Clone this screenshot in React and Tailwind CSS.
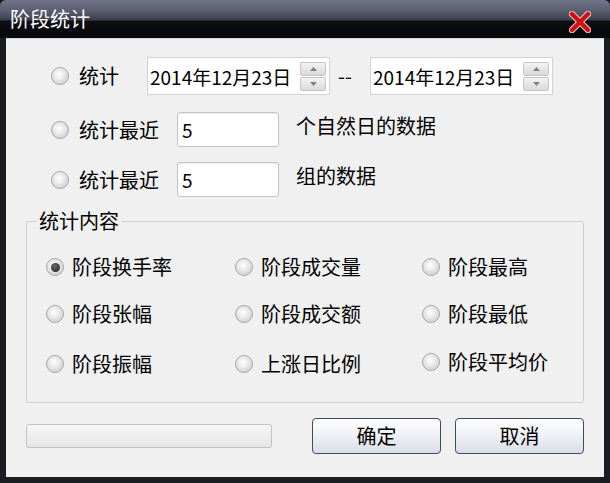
import React from "react";

const FONT = { fontFamily: '"Noto Sans CJK SC", "Noto Sans", sans-serif' };

function Radio({ checked }) {
  return (
    <span className="relative flex h-[18px] w-[18px] shrink-0 items-center justify-center rounded-full border border-[#a4a4a4] bg-[radial-gradient(circle_at_45%_40%,#ffffff_0%,#e6e6e6_45%,#bdbdbd_100%)] shadow-[inset_0_0_1px_#fff]">
      {checked && <span className="h-[9px] w-[9px] rounded-full bg-[radial-gradient(circle_at_40%_35%,#6a6a6a,#1c1c1c)]" />}
    </span>
  );
}

function Spinner() {
  return (
    <div className="flex flex-col gap-[1px]">
      <div className="flex h-[14px] w-[26px] items-center justify-center rounded-[2px] border border-[#c6c6c6] bg-[linear-gradient(to_bottom,#f4f4f4,#d9d9d9)]">
        <svg width="7" height="4" viewBox="0 0 7 4"><path d="M0 4 L3.5 0 L7 4 Z" fill="#7f7f7f" /></svg>
      </div>
      <div className="flex h-[14px] w-[26px] items-center justify-center rounded-[2px] border border-[#c6c6c6] bg-[linear-gradient(to_bottom,#f4f4f4,#d9d9d9)]">
        <svg width="7" height="4" viewBox="0 0 7 4"><path d="M0 0 L3.5 4 L7 0 Z" fill="#7f7f7f" /></svg>
      </div>
    </div>
  );
}

function DateBox() {
  return (
    <div className="flex h-[38px] w-[183px] items-center justify-between border border-[#d2d2d2] bg-white pl-[2px] pr-[3px]">
      <span className="text-[19px] leading-none text-black">2014年12月23日</span>
      <Spinner />
    </div>
  );
}

function TextInput() {
  return (
    <div className="flex h-[35px] w-[102px] items-center rounded-[3px] border border-[#c4c4c4] bg-white pl-[4px] shadow-[inset_0_1px_1px_rgba(0,0,0,0.08)]">
      <span className="text-[19px] leading-none text-black">5</span>
    </div>
  );
}

function Option({ checked, label, className = "" }) {
  return (
    <div className={"flex items-center gap-[8px] " + className}>
      <Radio checked={checked} />
      <span className="text-[20px] leading-none text-black">{label}</span>
    </div>
  );
}

export default function App() {
  return (
    <div style={FONT} className="flex h-[483px] w-[610px] flex-col bg-[#1b1c21]">
      {/* Title bar */}
      <div className="flex h-[38px] shrink-0 items-center justify-between rounded-t-[6px] bg-[linear-gradient(to_bottom,#72768a_0%,#585c6e_30%,#3c3f4c_52%,#0e0f13_56%,#060709_100%)] pl-[10px] pr-[19px]">
        <span className="text-[20px] leading-none text-white">阶段统计</span>
        <svg width="22" height="22" viewBox="0 0 22 22" className="mt-[6px]">
          <path d="M3 3 L19 19 M19 3 L3 19" stroke="#f0c8c8" strokeWidth="6.5" strokeLinecap="round" />
          <path d="M3 3 L19 19 M19 3 L3 19" stroke="#d01212" strokeWidth="4.5" strokeLinecap="round" />
        </svg>
      </div>

      {/* Body */}
      <div className="mx-[6px] mb-[6px] flex flex-1 flex-col border-t border-[#c9d3e0] bg-[#f0f0f0]">
        {/* Row 1 */}
        <div className="mt-[18px] flex h-[38px] items-center pl-[45px]">
          <Radio />
          <span className="ml-[10px] w-[68px] text-[20px] leading-none text-black">统计</span>
          <DateBox />
          <span className="ml-[8px] w-[32px] text-[20px] leading-none text-black">--</span>
          <DateBox />
        </div>
        {/* Row 2 */}
        <div className="mt-[17px] flex h-[35px] items-center pl-[45px]">
          <Radio />
          <span className="ml-[10px] w-[98px] text-[20px] leading-none text-black">统计最近</span>
          <TextInput />
          <span className="ml-[17px] -mt-[8px] text-[20px] leading-none text-black">个自然日的数据</span>
        </div>
        {/* Row 3 */}
        <div className="mt-[15px] flex h-[35px] items-center pl-[45px]">
          <Radio />
          <span className="ml-[10px] w-[98px] text-[20px] leading-none text-black">统计最近</span>
          <TextInput />
          <span className="ml-[17px] -mt-[8px] text-[20px] leading-none text-black">组的数据</span>
        </div>

        {/* Group */}
        <fieldset className="mx-[20px] mt-[12px] h-[194px] rounded-[3px] border border-[#cdcdcd] px-[19px] pb-0">
          <legend className="-ml-[10px] px-[3px] text-[20px] leading-[24px] text-black">统计内容</legend>
          <div className="mt-[24px] grid grid-cols-[189px_187px_1fr] gap-y-[27px]">
            <Option checked label="阶段换手率" />
            <Option label="阶段成交量" />
            <Option label="阶段最高" />
            <Option label="阶段张幅" />
            <Option label="阶段成交额" />
            <Option label="阶段最低" />
            <Option label="阶段振幅" className="mt-[3px]" />
            <Option label="上涨日比例" className="mt-[2px]" />
            <Option label="阶段平均价" className="-mt-[2px]" />
          </div>
        </fieldset>

        {/* Bottom */}
        <div className="mt-[15px] flex items-center pl-[20px]">
          <div className="h-[24px] w-[246px] rounded-[3px] border border-[#c2c2c2] bg-[linear-gradient(to_bottom,#f6f6f6,#e6e6e6)]" />
          <button className="ml-[40px] flex h-[36px] w-[129px] items-center justify-center rounded-[4px] border border-[#3e4c5c] bg-[linear-gradient(to_bottom,#ffffff_0%,#f0f2f6_45%,#d9dde8_100%)] text-[20px] leading-none text-black">确定</button>
          <button className="ml-[14px] flex h-[36px] w-[129px] items-center justify-center rounded-[4px] border border-[#3e4c5c] bg-[linear-gradient(to_bottom,#ffffff_0%,#f0f2f6_45%,#d9dde8_100%)] text-[20px] leading-none text-black">取消</button>
        </div>
      </div>
    </div>
  );
}
